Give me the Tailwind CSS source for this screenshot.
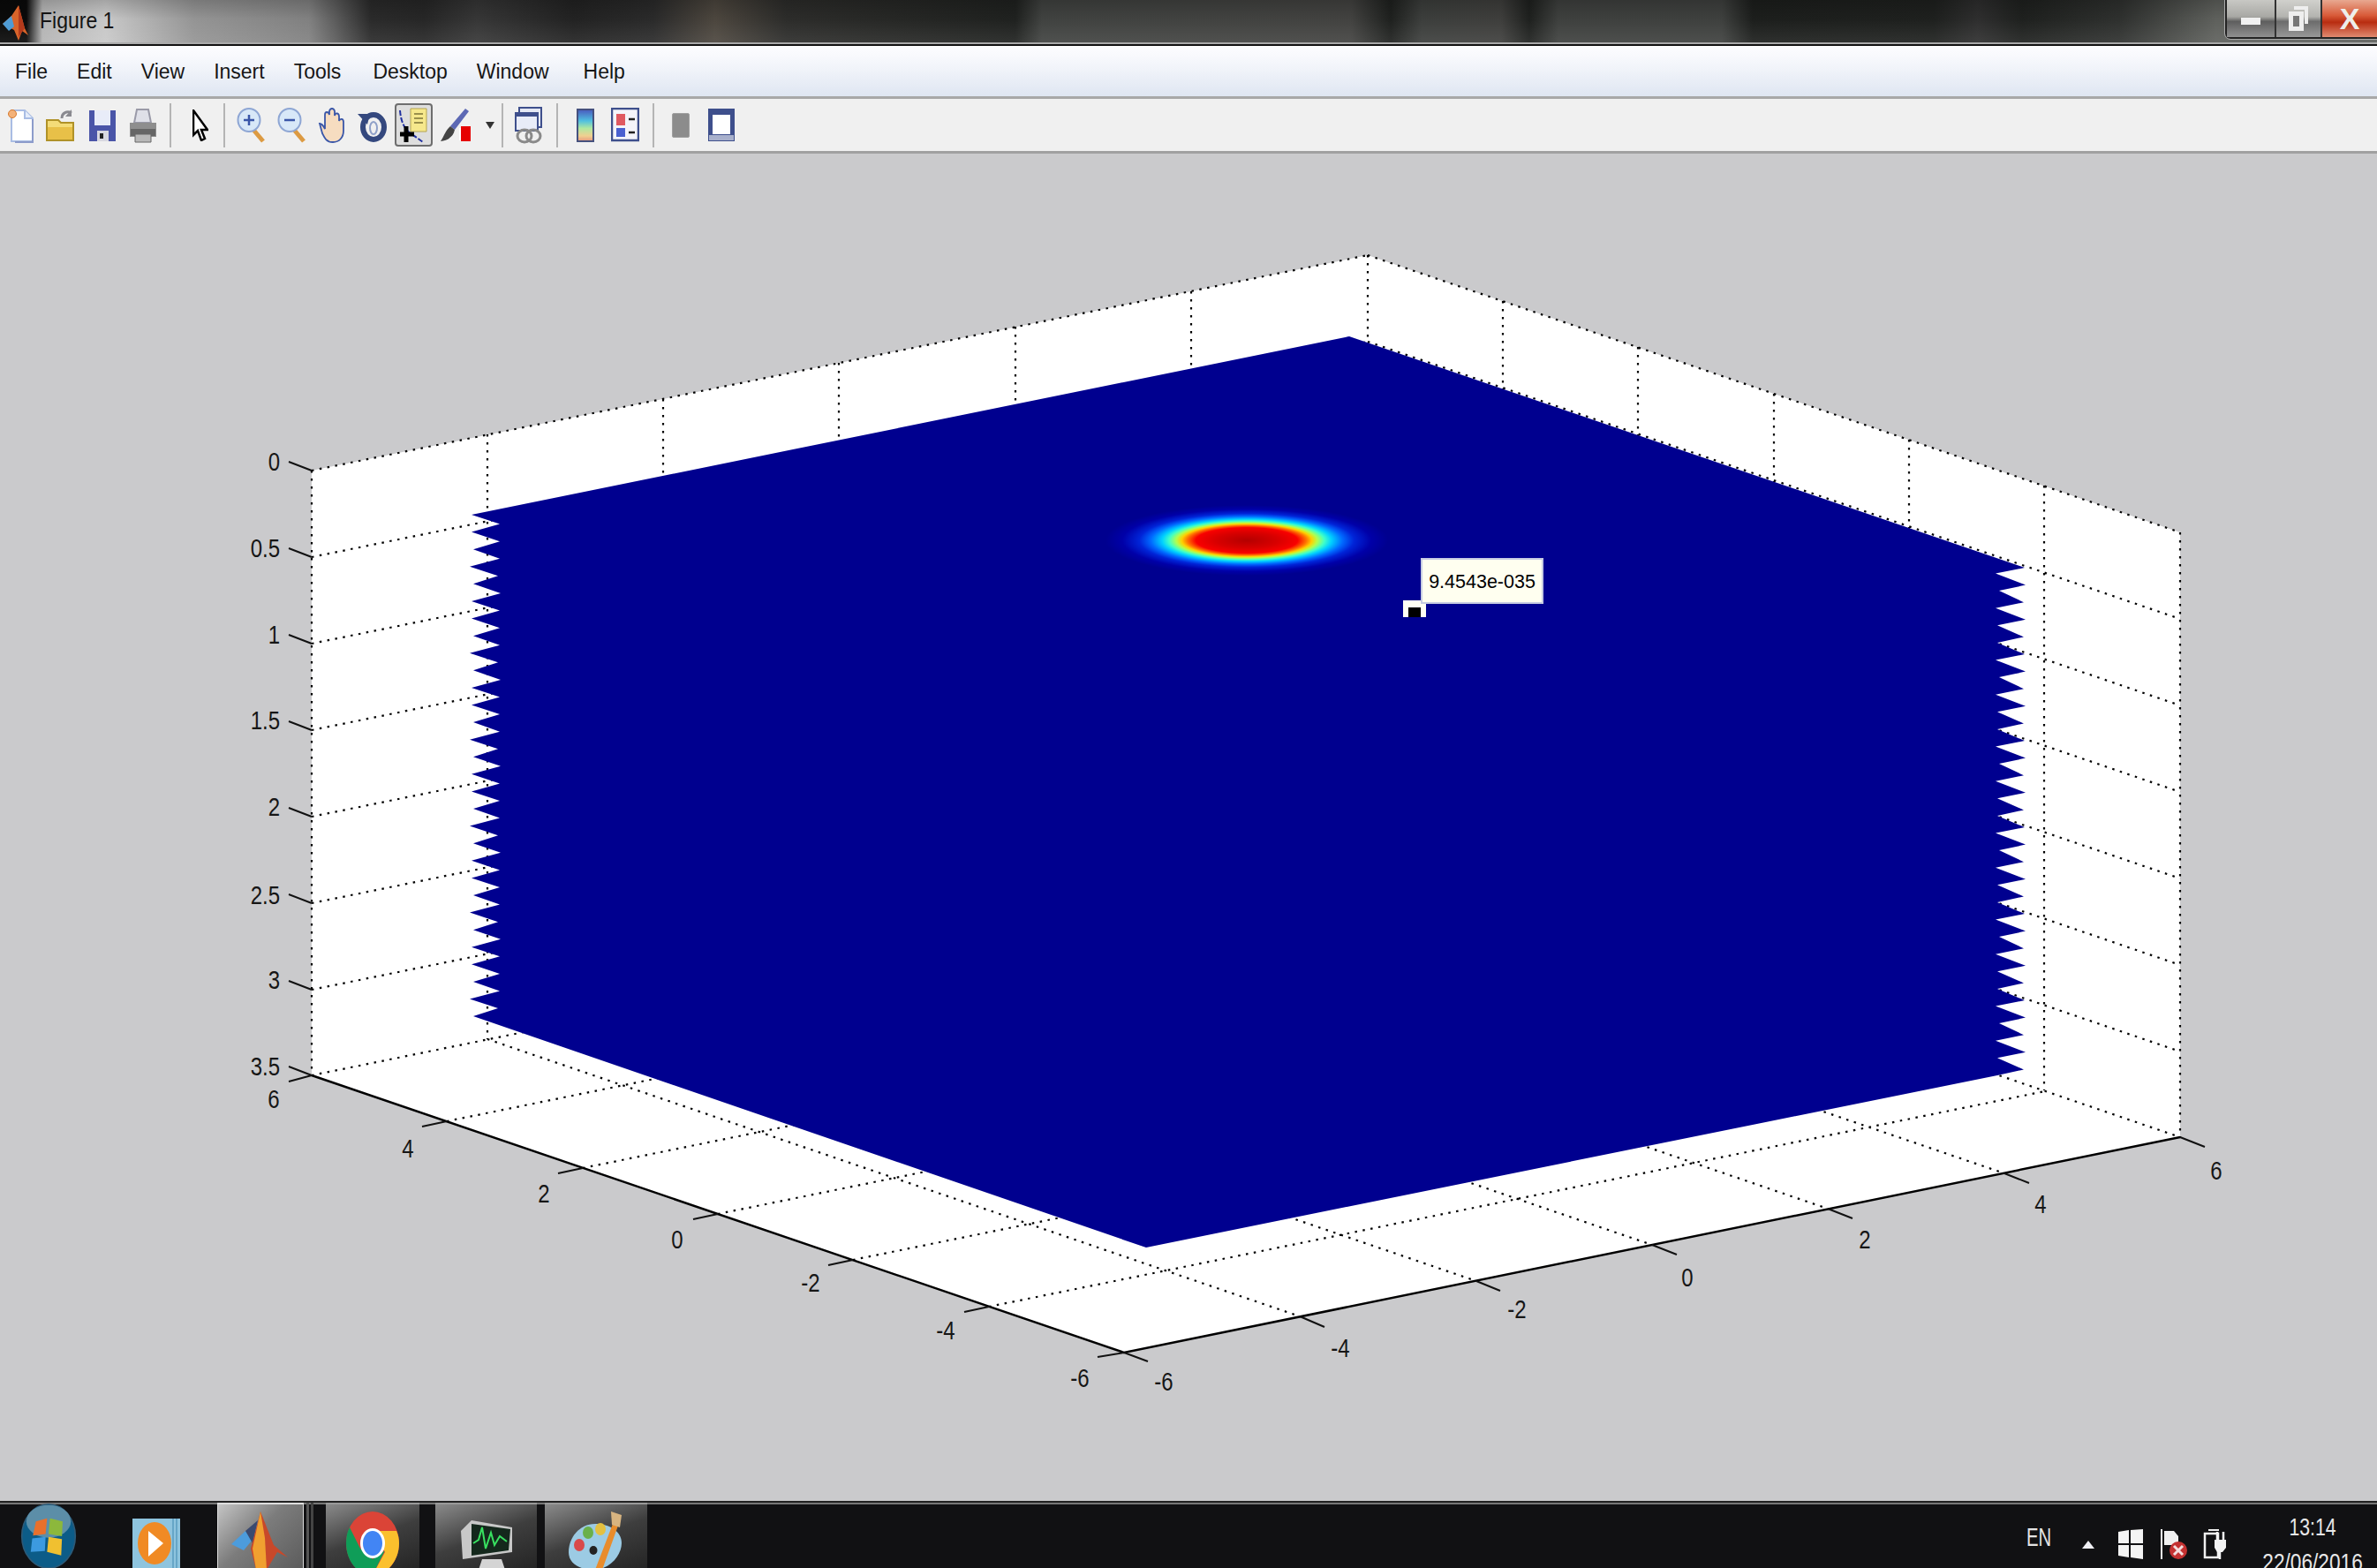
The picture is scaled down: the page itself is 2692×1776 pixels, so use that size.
<!DOCTYPE html>
<html lang="en">
  <head>
    <meta charset="UTF-8" />
    <title>Figure 1</title>
    <script src="https://cdn.jsdelivr.net/npm/@tailwindcss/browser@4"></script>
  </head>
  <body>
    <div class="w-[2692px] h-[1776px] flex flex-col overflow-hidden bg-[#cacacc] font-['Liberation_Sans',sans-serif]">
      <!-- title bar -->
      <header class="relative h-[48px] shrink-0 flex items-center bg-[linear-gradient(180deg,#0000002e,#00000000_45%,#ffffff14),linear-gradient(90deg,#0a0a0a_0,#0a0a0a_30px,#b4b4b4_48px,#c8c8c8_120px,#949494_220px,#808080_350px,#2a2a2a_420px,#262626_480px,#363636_540px,#222_650px,#2a2a2a_740px,#4c463e_810px,#2c2c2a_890px,#1f211f_1150px,#404240_1180px,#424240_1530px,#1e201e_1575px,#3c3e3c_1610px,#3e3e3c_1700px,#1e201e_1732px,#3e403e_1765px,#3e403e_1950px,#1c1e1c_1985px,#1e201e_2190px,#2e2e2e_2240px,#1e201e_2290px,#2e302e_2400px,#5e605c_2510px)]">
        <svg class="w-[30px] h-[44px] ml-[2px]" viewBox="0 0 30 44">
          <path d="M1 25 11 16 19 4 26 30 30 38 23 33 19 44 14 32z" fill="#d8642a" />
          <path d="M1 25 11 16 14 28 8 33z" fill="#4f9bd4" />
          <path d="M19 4 26 30 19 40z" fill="#b33a1c" />
        </svg>
        <span class="ml-[13px] origin-left scale-x-[.92] text-[25px] text-[#141414]">Figure 1</span>
        <div class="absolute right-0 top-0 h-[44px] flex items-stretch border-l-2 border-b-2 border-[#222] rounded-bl-[6px] outline outline-1 outline-[#aaa]">
          <div class="w-[56px] flex items-center justify-center bg-[linear-gradient(180deg,#c8c8c4,#a8a8a4_45%,#5e5e5e_58%,#909090)] border-r-2 border-[#333]">
            <div class="w-[22px] h-[8px] bg-[#f0f0f0] mt-[6px]"></div>
          </div>
          <div class="w-[52px] flex items-center justify-center bg-[linear-gradient(180deg,#d0d0cc,#b4b4b0_45%,#6c6c6c_58%,#989898)] border-r-2 border-[#333]">
            <svg class="w-[24px] h-[30px]" viewBox="0 0 24 30"><path d="M7 1h16v20H19V5H7z" fill="#eee" /><path d="M1 7h17v22H1z" fill="#eee" /><path d="M6 12h7v12H6z" fill="#777" /></svg>
          </div>
          <div class="w-[62px] flex items-center justify-center bg-[linear-gradient(180deg,#e8a890,#d85a38_42%,#b82c10_60%,#e08a70)]">
            <span class="text-[34px] leading-none font-bold text-[#eeeeea]">X</span>
          </div>
        </div>
      </header>
      <div class="h-[4px] shrink-0 bg-[linear-gradient(180deg,#aaa_50%,#111_50%)]"></div>

      <!-- menu bar -->
      <nav class="h-[60px] shrink-0 flex items-center gap-[33px] pl-[17px] pt-[2px] text-[23px] text-[#161616] bg-[linear-gradient(180deg,#fdfdff,#f4f6fb_35%,#dfe6f2)] border-b-[3px] border-[#a8a8a8]">
        <span>File</span><span>Edit</span><span>View</span><span>Insert</span><span>Tools</span><span class="ml-[3px]">Desktop</span><span>Window</span><span class="ml-[6px]">Help</span>
      </nav>

      <!-- toolbar -->
      <div class="h-[62px] shrink-0 flex items-center bg-[#f0f0f0] border-b-[3px] border-[#a0a0a0]">
        <svg class="ml-[8px] w-[32px] h-[40px]" viewBox="0 0 32 40"><path d="M5 3h15l9 9v26H5z" fill="#fff" stroke="#a9bde4" stroke-width="2" /><path d="M20 3v9h9" fill="#e4ecfa" stroke="#a9bde4" stroke-width="2" /><path d="M29 13v26H9" fill="none" stroke="#8d9ccb" stroke-width="2" /><circle cx="6" cy="7" r="4.5" fill="#f3b27a" stroke="#d77a2e" /></svg>
        <svg class="ml-[12px] w-[32px] h-[40px]" viewBox="0 0 32 40"><path d="M1 14h13l3 3h14v20H1z" fill="#f4dc78" stroke="#b09228" stroke-width="2" /><path d="M2 22h28v14H2z" fill="#e8c048" /><path d="M18 12c0-6 6-9 11-6" fill="none" stroke="#8a8a90" stroke-width="3" /><path d="M29 2v8h-7z" fill="#8a8a90" /></svg>
        <svg class="ml-[16px] w-[32px] h-[40px]" viewBox="0 0 32 40"><path d="M1 3h30v35H1z" fill="#4a55a8" /><path d="M7 3h18v17H7z" fill="#e8ecf8" /><path d="M10 26h13v12H10z" fill="#d8d8e0" /><path d="M13 29h4v6h-4z" fill="#222" /></svg>
        <svg class="ml-[14px] w-[32px] h-[40px]" viewBox="0 0 32 40"><path d="M9 2h13l3 15H6z" fill="#dfe0e8" stroke="#9a9aa8" stroke-width="2" /><path d="M1 17h30v16H1z" fill="#8e8e8e" /><path d="M2 24h28v8H2z" fill="#666" /><path d="M7 30h18v9H7z" fill="#b8b8b8" stroke="#666" /></svg>
        <div class="ml-[14px] w-[2px] h-[50px] bg-[#b4b4b4]"></div>
        <svg class="ml-[24px] w-[18px] h-[36px]" viewBox="0 0 18 36"><path d="M1 1v28l5-5 4 11 4-2-4-10h7z" fill="#fff" stroke="#000" stroke-width="2.5" /></svg>
        <div class="ml-[17px] w-[2px] h-[50px] bg-[#b4b4b4]"></div>
        <svg class="ml-[13px] w-[33px] h-[40px]" viewBox="0 0 33 40"><path d="M19 25 30 38" stroke="#dc9a42" stroke-width="5" /><ellipse cx="14" cy="14" rx="12.500" ry="13" fill="#d8e8f8" stroke="#8ea6d4" stroke-width="2" /><path d="M14 8v12M8 14h12" stroke="#3a56a8" stroke-width="2.500" /></svg>
        <svg class="ml-[13px] w-[33px] h-[40px]" viewBox="0 0 33 40"><path d="M19 25 30 38" stroke="#dc9a42" stroke-width="5" /><ellipse cx="14" cy="14" rx="12.500" ry="13" fill="#d8e8f8" stroke="#8ea6d4" stroke-width="2" /><path d="M8 14h12" stroke="#3a56a8" stroke-width="2.500" /></svg>
        <svg class="ml-[12px] w-[33px] h-[40px]" viewBox="0 0 33 40"><path d="M3 18c3 0 5 4 6 6V8c0-4 4-4 5 0V4c1-4 5-4 6 0v5c1-4 5-3 5 1v5c1-3 5-3 5 1v10c0 8-5 13-12 13-8 0-10-6-12-10z" fill="#f6dcc0" stroke="#3a56a8" stroke-width="1.800" /></svg>
        <svg class="ml-[13px] w-[33px] h-[40px]" viewBox="0 0 33 40"><ellipse cx="18" cy="22" rx="12" ry="14" fill="none" stroke="#34487e" stroke-width="6" /><ellipse cx="18" cy="23" rx="4" ry="7" fill="none" stroke="#8fa0c8" stroke-width="2" /><path d="M0 7h14l-3 12z" fill="#34487e" /></svg>
        <div class="ml-[9px] w-[43px] h-[49px] flex items-center justify-center rounded-[4px] border-2 border-[#6e6e6e] bg-[#dedede]">
          <svg class="w-[37px] h-[42px]" viewBox="0 0 37 42"><path d="M3 4c1 14 6 22 12 26l14 10" fill="none" stroke="#2030a0" stroke-width="2" stroke-dasharray="6 2" /><path d="M15 2h18v26H15z" fill="#f6e88c" stroke="#b4a450" /><path d="M19 8h10M19 13h10M19 18h10" stroke="#9a904c" stroke-width="2" /><path d="M10 22v18M3 31h16" stroke="#000" stroke-width="5" /></svg>
        </div>
        <svg class="ml-[8px] w-[35px] h-[40px]" viewBox="0 0 35 40"><path d="M29 1 33 4 17 25 12 21z" fill="#5c68b4" /><path d="M12 21 17 25C15 34 8 37 1 38 5 32 7 25 12 21z" fill="#444" /><path d="M22 23h13v14H22z" fill="#fff" /><path d="M24 21h11v17H24z" fill="#e60000" /></svg>
        <svg class="ml-[17px] w-[10px] h-[8px]" viewBox="0 0 10 8"><path d="M0 0h10L5 8z" fill="#333" /></svg>
        <div class="ml-[8px] w-[2px] h-[50px] bg-[#b4b4b4]"></div>
        <svg class="ml-[13px] w-[32px] h-[42px]" viewBox="0 0 32 42"><path d="M5 1h25v22H5z" fill="#e4e8f4" stroke="#3e4f8c" stroke-width="2" /><path d="M1 7h25v20H1z" fill="#e8ecf8" stroke="#3e4f8c" stroke-width="2" /><path d="M1 7h25v4H1z" fill="#3e4f8c" /><ellipse cx="11" cy="33" rx="8" ry="7" fill="none" stroke="#8a8a8a" stroke-width="3" /><ellipse cx="21" cy="33" rx="8" ry="7" fill="none" stroke="#8a8a8a" stroke-width="3" /></svg>
        <div class="ml-[15px] w-[2px] h-[50px] bg-[#b4b4b4]"></div>
        <div class="ml-[21px] w-[20px] h-[38px] border-2 border-[#45517e] bg-[linear-gradient(180deg,#4a60c0,#50c0e0_35%,#b0e8a0_60%,#f0d090_85%,#e8a080)]"></div>
        <svg class="ml-[19px] w-[32px] h-[40px]" viewBox="0 0 32 40"><path d="M1 1h30v36H1z" fill="#f4f4fa" stroke="#3e4f8c" stroke-width="2.500" /><path d="M6 7h10v13H6z" fill="#e05a62" /><path d="M6 23h10v10H6z" fill="#4a60d0" /><path d="M20 13h7M20 28h7" stroke="#222" stroke-width="2.500" /></svg>
        <div class="ml-[15px] w-[2px] h-[50px] bg-[#b4b4b4]"></div>
        <div class="ml-[20px] w-[20px] h-[28px] rounded-[2px] bg-[#8c8c8c] border border-[#a0a0a0]"></div>
        <svg class="ml-[20px] w-[32px] h-[40px]" viewBox="0 0 32 40"><path d="M1 1h30v37H1z" fill="#3e4f8c" /><path d="M6 8h20v22H6z" fill="#fff" /><path d="M2 31h28v6H2z" fill="#a8b0cc" /></svg>
      </div>

      <!-- figure area -->
      <main class="relative flex-1">
        <svg class="block w-[2692px] h-[1526px] font-['Liberation_Sans',sans-serif] text-[30px] fill-[#161616]" viewBox="0 174 2692 1526">
          <defs>
            <radialGradient id="peak">
              <stop offset="0" stop-color="#b40000" />
              <stop offset=".22" stop-color="#d80000" />
              <stop offset=".36" stop-color="#f80000" />
              <stop offset=".42" stop-color="#ff7000" />
              <stop offset=".46" stop-color="#ffd000" />
              <stop offset=".5" stop-color="#b0ff50" />
              <stop offset=".55" stop-color="#40ffc8" />
              <stop offset=".6" stop-color="#00d0ff" />
              <stop offset=".68" stop-color="#0068ff" />
              <stop offset=".76" stop-color="#0024d8" />
              <stop offset=".88" stop-color="#0000a8" />
              <stop offset="1" stop-color="#00008f" />
            </radialGradient>
          </defs>
          <path d="M353 533 1549 289 2469 603V1288L1273 1532 353 1218z" fill="#fff" />
          <path fill="none" stroke="#000" stroke-width="2.200" stroke-dasharray="2.500 6.500"
            d="M353 533V1218M552 492V1177M751 452V1137M950 411V1096M1150 370V1055M1349 330V1015M1549 289V974
               M1702 341V1026M1855 393V1078M2009 446V1131M2162 498V1183M2315 550V1235M2469 603V1288
               M353 533 1549 289M353 631 1549 387M353 729 1549 485M353 827 1549 583M353 925 1549 681M353 1023 1549 779M353 1121 1549 877M353 1218 1549 974
               M1549 289 2469 603M1549 387 2469 701M1549 485 2469 799M1549 583 2469 897M1549 681 2469 995M1549 779 2469 1093M1549 877 2469 1191M1549 974 2469 1288
               M506 1270 1702 1026M660 1323 1855 1079M813 1375 2009 1131M966 1427 2162 1183M1120 1480 2316 1236
               M552 1177 1472 1491M752 1137 1672 1451M951 1096 1871 1410M1150 1055 2070 1369M1350 1015 2270 1329" />
          <polygon id="surface" fill="#00008f" points="1528,381 2293,643 2293,1212 1298,1413 536,1151 534,583" />
          <ellipse cx="1412" cy="612" rx="160" ry="40" fill="url(#peak)" />

          <path fill="none" stroke="#000" stroke-width="2.500" d="M353 1218 1273 1532 2469 1288" />
          <path fill="none" stroke="#111" stroke-width="2"
            d="M327 523 353 533M327 621 353 631M327 719 353 729M327 817 353 827M327 915 353 925M327 1013 353 1023M327 1111 353 1121M327 1208 353 1218
               M327 1225 353 1218M478 1276 506 1270M632 1329 660 1323M785 1381 813 1375M938 1433 966 1427M1092 1486 1120 1480M1243 1537 1273 1532
               M1300 1542 1273 1532M1500 1503 1472 1491M1699 1462 1672 1451M1899 1421 1871 1410M2098 1380 2070 1369M2298 1340 2270 1329M2497 1299 2469 1288" />

          <g text-anchor="end">
            <text transform="translate(317 533) scale(.8 1)">0</text>
            <text transform="translate(317 631) scale(.8 1)">0.5</text>
            <text transform="translate(317 729) scale(.8 1)">1</text>
            <text transform="translate(317 826) scale(.8 1)">1.5</text>
            <text transform="translate(317 924) scale(.8 1)">2</text>
            <text transform="translate(317 1024) scale(.8 1)">2.5</text>
            <text transform="translate(317 1120) scale(.8 1)">3</text>
            <text transform="translate(317 1218) scale(.8 1)">3.5</text>
          </g>
          <g text-anchor="middle">
            <text transform="translate(310 1255) scale(.8 1)">6</text>
            <text transform="translate(462 1311) scale(.8 1)">4</text>
            <text transform="translate(616 1362) scale(.8 1)">2</text>
            <text transform="translate(767 1414) scale(.8 1)">0</text>
            <text transform="translate(918 1463) scale(.8 1)">-2</text>
            <text transform="translate(1071 1517) scale(.8 1)">-4</text>
            <text transform="translate(1223 1571) scale(.8 1)">-6</text>
            <text transform="translate(1318 1575) scale(.8 1)">-6</text>
            <text transform="translate(1518 1537) scale(.8 1)">-4</text>
            <text transform="translate(1718 1493) scale(.8 1)">-2</text>
            <text transform="translate(1911 1457) scale(.8 1)">0</text>
            <text transform="translate(2112 1414) scale(.8 1)">2</text>
            <text transform="translate(2311 1374) scale(.8 1)">4</text>
            <text transform="translate(2510 1336) scale(.8 1)">6</text>
          </g>

          <path d="M1589 680h26v19h-26z" fill="#fffff4" />
          <path d="M1595 688h14v11h-14z" fill="#000" />
        </svg>
        <!-- data tip -->
        <div class="absolute left-[1609px] top-[458px] w-[139px] h-[52px] flex items-center justify-center pt-[2px] bg-[#fffff0] border-2 border-[#c6cbe2] text-[21.500px] text-black">9.4543e-035</div>
      </main>

      <!-- taskbar -->
      <footer class="relative h-[76px] shrink-0 flex overflow-hidden bg-[#111113] border-t-[2px] border-[#222] shadow-[inset_0_2px_0_#777]">
        <svg class="ml-[18px] mt-[1px] w-[74px] h-[74px] shrink-0 overflow-visible" viewBox="0 0 74 88">
          <ellipse cx="37" cy="44" rx="36" ry="43" fill="#0c5c88" stroke="#2c5a78" stroke-width="2" />
          <ellipse cx="37" cy="24" rx="30" ry="22" fill="#5c8ea8" />
          <path d="M20 24 35 20 33 41 16 43z" fill="#e8702c" />
          <path d="M39 20 56 24 55 44 37 41z" fill="#8cb83c" />
          <path d="M15 47 33 45 32 64 13 65z" fill="#3c9ae0" />
          <path d="M37 45 55 48 54 70 35 65z" fill="#f0c030" />
        </svg>
        <svg class="ml-[58px] mt-[18px] w-[54px] h-[56px] shrink-0" viewBox="0 0 54 56">
          <path d="M0 0h54v56H0z" fill="#8ec4de" />
          <path d="M46 0v56M50 0v56" stroke="#5a9cc0" stroke-width="1.500" />
          <ellipse cx="25" cy="28" rx="19" ry="24" fill="#f08a24" />
          <path d="M18 14 35 28 18 43z" fill="#fff" />
        </svg>
        <div class="ml-[42px] w-[98px] h-[74px] shrink-0 flex justify-center border-t-2 border-l border-r border-[#ddd] bg-[linear-gradient(135deg,#c4c4c4,#7c7c7c_45%,#5c5c5c)]">
          <svg class="mt-[8px] w-[66px] h-[66px]" viewBox="0 0 66 66">
            <path d="M0 37 16 22 24 32 14 44z" fill="#4c9cdc" />
            <path d="M16 22 30 10 24 36z" fill="#3a4a70" />
            <path d="M33 0 48 38 64 52 52 46 40 66H28L22 42 30 12z" fill="#c8482a" />
            <path d="M33 0 30 14 24 42 28 66H40L38 30z" fill="#f0a030" />
          </svg>
        </div>
        <div class="ml-[3px] w-[3px] h-[74px] shrink-0 bg-[#555]"></div>
        <div class="ml-[2px] w-[3px] h-[74px] shrink-0 bg-[#444]"></div>
        <div class="ml-[14px] w-[106px] h-[74px] shrink-0 flex justify-center border-t-2 border-[#999] bg-[linear-gradient(160deg,#8a8a8a,#3e3e3e_50%,#252525)]">
          <svg class="mt-[8px] w-[60px] h-[72px]" viewBox="0 0 60 72">
            <ellipse cx="30" cy="36" rx="30" ry="36" fill="#db4437" />
            <path d="M0 36C0 55 12 72 30 72L44 44 30 54 16 42 4 18C1 23 0 29 0 36z" fill="#0f9d58" />
            <path d="M30 72C47 72 60 55 60 36 60 31 59 26 57 22H32L44 46z" fill="#fbc02d" />
            <ellipse cx="30" cy="36" rx="14" ry="17" fill="#fff" />
            <ellipse cx="30" cy="36" rx="11" ry="14" fill="#4285f4" />
          </svg>
        </div>
        <div class="ml-[18px] w-[115px] h-[74px] shrink-0 flex justify-center border-t-2 border-[#999] bg-[linear-gradient(160deg,#8a8a8a,#3e3e3e_50%,#252525)]">
          <svg class="mt-[10px] w-[62px] h-[64px]" viewBox="0 0 62 64">
            <path d="M14 8 60 16 60 44 4 52 2 20z" fill="#c8c8c8" />
            <path d="M14 12 58 18 56 42 14 48z" fill="#14281c" />
            <path d="M16 34 22 30 26 16 30 40 36 22 40 36 46 26 54 32" fill="none" stroke="#38e060" stroke-width="2" />
            <path d="M26 52h22l4 12H22z" fill="#d4d4d4" />
          </svg>
        </div>
        <div class="ml-[9px] w-[116px] h-[74px] shrink-0 flex justify-center border-t-2 border-[#999] bg-[linear-gradient(160deg,#8a8a8a,#3e3e3e_50%,#252525)]">
          <svg class="mt-[8px] w-[62px] h-[66px]" viewBox="0 0 62 66">
            <path d="M30 14C12 14 0 30 0 46c0 14 14 20 28 20 20 0 32-18 32-30C60 22 46 14 30 14z" fill="#9ccbe4" />
            <ellipse cx="12" cy="38" rx="6" ry="7" fill="#d84a4a" />
            <ellipse cx="22" cy="24" rx="6" ry="7" fill="#6ab04a" />
            <ellipse cx="36" cy="20" rx="6" ry="7" fill="#e4c040" />
            <ellipse cx="28" cy="44" rx="4.500" ry="5" fill="#222" />
            <path d="M50 14 56 16 38 66H30z" fill="#e88c2c" />
            <path d="M48 0 60 4 58 18 49 15z" fill="#d8b480" />
          </svg>
        </div>

        <!-- tray -->
        <div class="absolute left-[2295px] top-[22px] origin-left scale-x-[.7] text-[29px] leading-[34px] text-[#e4e4e4]">EN</div>
        <svg class="absolute left-[2358px] top-[43px] w-[14px] h-[9px]" viewBox="0 0 14 9"><path d="M7 0 14 9H0z" fill="#f0f0f4" /></svg>
        <svg class="absolute left-[2399px] top-[30px] w-[28px] h-[34px]" viewBox="0 0 28 34"><path d="M0 3 12 1V16H0zM14 1 28 0V16H14zM0 18H12V32L0 30zM14 18H28V34L14 32z" fill="#f4f4f4" /></svg>
        <svg class="absolute left-[2447px] top-[30px] w-[30px] h-[36px]" viewBox="0 0 30 36"><path d="M1 0v34" stroke="#f0f0f0" stroke-width="2" /><path d="M4 2h11l5 6v10H4z" fill="#f0f0f0" /><circle cx="20" cy="24" r="10" fill="#c43232" /><path d="M15 19 25 29M25 19 15 29" stroke="#f4dede" stroke-width="3" /></svg>
        <svg class="absolute left-[2495px] top-[30px] w-[27px] h-[36px]" viewBox="0 0 27 36"><path d="M2 5h15v27H2z" fill="none" stroke="#f0f0f0" stroke-width="2.500" /><path d="M6 1h12" stroke="#f0f0f0" stroke-width="2" /><path d="M13 12h13v9l-4 5h-6l-3-5z" fill="#f4f4f4" /><path d="M16 3v9M23 3v9M19 26v8" stroke="#f4f4f4" stroke-width="2.500" /></svg>
        <div class="absolute left-[2563px] w-[113px] top-[8px] flex flex-col items-center text-[28px] leading-[40px] text-[#e8e8e8]">
          <span class="scale-x-[.76]">13:14</span>
          <span class="scale-x-[.81] whitespace-nowrap">22/06/2016</span>
        </div>
      </footer>
    </div>
    <script>
      // zigzag edges of the surface, the mesh is coarse along z
      var tipR = [2293, 2294, 2292, 2294, 2292];
      var valR = [2260, 2264, 2260, 2262, 2262];
      var tipL = [534, 534, 536, 532, 536];
      var valL = [567, 566, 566, 566, 564];
      var pts = ["1528,381"];
      for (var i = 0; i < 30; i++) {
        var y = 643 + 19.6 * i;
        pts.push(tipR[i % 5] + "," + y);
        pts.push(valR[i % 5] + "," + (y + 6.5));
      }
      pts.push("1298,1413");
      for (var j = 29; j >= 0; j--) {
        var ly = 583 + 19.59 * j;
        pts.push(tipL[j % 5] + "," + ly);
        if (j > 0) pts.push(valL[j % 5] + "," + (ly - 9));
      }
      document.getElementById("surface").setAttribute("points", pts.join(" "));
    </script>
  </body>
</html>
